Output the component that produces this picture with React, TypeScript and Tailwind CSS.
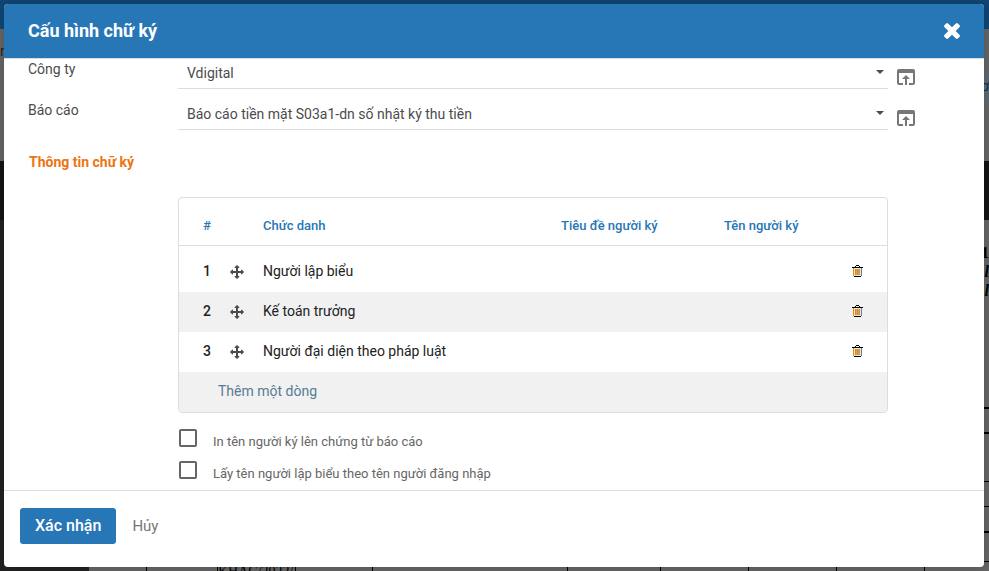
import { useState } from "react";
import { MdOpenInBrowser } from "react-icons/md";

const TIMES =
  "M1490 1322q0 40-28 68l-136 136q-28 28-68 28t-68-28l-294-294-294 294q-28 28-68 28t-68-28l-136-136q-28-28-28-68t28-68l294-294-294-294q-28-28-28-68t28-68l136-136q28-28 68-28t68 28l294 294 294-294q28-28 68-28t68 28l136 136q28 28 28 68t-28 68l-294 294 294 294q28 28 28 68z";
const ARROWS =
  "M1792 896q0 26-19 45l-256 256q-19 19-45 19t-45-19-19-45v-128h-384v384h128q26 0 45 19t19 45-19 45l-256 256q-19 19-45 19t-45-19l-256-256q-19-19-19-45t19-45 45-19h128v-384h-384v128q0 26-19 45t-45 19-45-19l-256-256q-19-19-19-45t19-45l256-256q19-19 45-19t45 19 19 45v128h384v-384h-128q-26 0-45-19t-19-45 19-45l256-256q19-19 45-19t45 19l256 256q19 19 19 45t-19 45-45 19h-128v384h384v-128q0-26 19-45t45-19 45 19l256 256q19 19 19 45z";

function MoveIcon() {
  return (
    <svg viewBox="0 0 1792 1792" className="size-[14px] fill-[#4c4c4c]" aria-hidden="true">
      <path d={ARROWS} />
    </svg>
  );
}

function TrashIcon() {
  return (
    <svg viewBox="0 0 11 12" className="h-3 w-[11px]" aria-hidden="true">
      <rect x="1" y="3" width="9" height="8" fill="#f8e6cc" />
      <path d="M1 3h1v8H1zM3 4h1v6H3zM5 4h1v6H5zM7 4h1v6H7z" fill="#d98a1c" />
      <path d="M4 4h1v6H4zM6 4h1v6H6z" fill="#c9a67c" />
      <path d="M9 3h1v8H9z" fill="#4f86bd" />
      <path d="M4 0h3v1H4zM3 1h1v1H3zM7 1h1v1H7zM0 2h11v1H0zM2 11h7v1H2z" fill="#000" />
    </svg>
  );
}

function SelectRow({ id, label, value }: { id: string; label: string; value: string }) {
  return (
    <div className="flex h-[41px] items-start">
      <label htmlFor={id} className="w-[150px] shrink-0 text-sm leading-5 text-[#4c4c4c]">
        {label}
      </label>
      <div className="relative mr-1.5 h-[30px] flex-1 border-b border-[#dddddd]">
        <select
          id={id}
          className="h-full w-full appearance-none bg-transparent pb-0.5 pl-[9px] text-sm text-[#4c4c4c] outline-none"
        >
          <option>{value}</option>
        </select>
        <span className="pointer-events-none absolute top-[11px] right-1 border-x-4 border-t-4 border-x-transparent border-t-[#4c4c4c]" />
      </div>
      <button type="button" aria-label={"Mở " + label} className="mt-1.5 text-[#777777]">
        <MdOpenInBrowser className="size-6" />
      </button>
    </div>
  );
}

function CheckRow({ id, label }: { id: string; label: string }) {
  return (
    <div className="flex h-8 items-start">
      <input
        id={id}
        type="checkbox"
        className="ml-px size-[18px] shrink-0 appearance-none rounded-xs border-2 border-[#666666] checked:bg-[#2776b6]"
      />
      <label htmlFor={id} className="pt-[5px] pl-4 text-[13px] leading-4 text-[#666666]">
        {label}
      </label>
    </div>
  );
}

function Backdrop() {
  return (
    <div className="absolute inset-0 flex flex-col bg-[#666666]" aria-hidden="true">
      <div className="h-[29px] shrink-0 bg-[#104775]" />
      <div className="flex h-[132px] shrink-0 justify-between">
        <span className="pt-3 text-sm text-[#222222]">n</span>
        <div className="mt-[42px] h-[30px] w-2 bg-[#5d6973] text-right text-sm leading-[30px] text-[#12304f]">
          ơ
        </div>
      </div>
      <div className="h-[59px] shrink-0 bg-[#141414]" />
      <div className="flex flex-1">
        <div className="w-[89px] bg-[#222222]" />
        <div className="flex flex-1 flex-col">
          <div className="flex h-[187px] flex-col items-end pt-[23px] font-[Liberation_Serif] text-base leading-[19px] font-bold text-black">
            <span>1</span>
            <span className="italic">l</span>
            <span className="italic">l</span>
          </div>
          <div className="h-[27px] border-y-2 border-black" />
          <div className="h-12 border-b border-black" />
          <div className="h-[25px] border-b border-black" />
          <div className="h-[26px] border-b-2 border-black" />
          <div className="h-[29px] border-b border-black" />
          <div className="flex flex-1 font-[Liberation_Serif] text-sm leading-5 text-black">
            <div className="w-[58px] border-r border-black" />
            <div className="w-[71px] border-r border-black" />
            <div className="h-[9px] w-[78px] border-r border-black">KHAC/2022/</div>
            <div className="w-[77px] border-r border-black" />
            <div className="w-[195px] border-r border-black" />
            <div className="w-[93px] border-r border-black" />
            <div className="w-[88px] border-r border-black" />
            <div className="w-[88px] border-r border-black" />
            <div className="w-[88px] border-r border-black" />
          </div>
        </div>
      </div>
    </div>
  );
}

const ROWS = ["Người lập biểu", "Kế toán trưởng", "Người đại diện theo pháp luật"];

export default function App() {
  const [rows] = useState(ROWS);
  return (
    <div className="relative flex h-screen overflow-hidden pt-1 pr-[5px] pb-1 pl-1 font-[Roboto,sans-serif]">
      <Backdrop />
      <div
        role="dialog"
        aria-labelledby="dialog-title"
        className="relative flex flex-1 flex-col overflow-hidden rounded bg-white shadow-[0_0_12px_rgba(0,0,0,0.2)]"
      >
        <header className="flex h-[54px] shrink-0 items-center justify-between bg-[#2776b6] px-6 text-white">
          <h1 id="dialog-title" className="text-lg font-bold">
            Cấu hình chữ ký
          </h1>
          <button type="button" aria-label="Đóng">
            <svg viewBox="302 366 1188 1188" className="size-4 fill-white" aria-hidden="true">
              <path d={TIMES} />
            </svg>
          </button>
        </header>

        <main className="min-h-0 flex-1 overflow-hidden border-t border-[#dddddd] pr-[66px] pl-6">
          <SelectRow id="company" label="Công ty" value="Vdigital" />
          <SelectRow id="report" label="Báo cáo" value="Báo cáo tiền mặt S03a1-dn số nhật ký thu tiền" />

          <h2 className="mt-[11px] pl-px text-sm leading-5 font-bold text-[#ee7411]">Thông tin chữ ký</h2>

          <div className="mt-[25px] mr-[30px] ml-[150px]">
            <div className="overflow-hidden rounded border border-[#dddddd]">
              <table className="w-full table-fixed border-collapse text-left text-sm text-[#222222]">
                <colgroup>
                  <col className="w-[44px]" />
                  <col className="w-[40px]" />
                  <col className="w-[298px]" />
                  <col className="w-[163px]" />
                  <col />
                  <col className="w-[60px]" />
                </colgroup>
                <thead>
                  <tr className="h-[47px] border-b border-[#dddddd] text-[13px] text-[#2776b6]">
                    <th className="pt-[11px] pl-6 font-medium">#</th>
                    <th />
                    <th className="pt-[11px] font-medium">Chức danh</th>
                    <th className="pt-[11px] font-medium">Tiêu đề người ký</th>
                    <th className="pt-[11px] font-medium">Tên người ký</th>
                    <th />
                  </tr>
                </thead>
                <tbody>
                  <tr className="h-[7px]">
                    <td colSpan={6} />
                  </tr>
                  {rows.map((name, i) => (
                    <tr key={name} className="h-10 even:bg-white odd:bg-[#f1f1f1]">
                      <td className="pb-0.5 pl-6 font-medium">{i + 1}</td>
                      <td className="pl-[7px]">
                        <MoveIcon />
                      </td>
                      <td className="pb-0.5">{name}</td>
                      <td />
                      <td />
                      <td className="pb-0.5 pl-[25px]">
                        <button type="button" aria-label={"Xóa " + name} className="block">
                          <TrashIcon />
                        </button>
                      </td>
                    </tr>
                  ))}
                  <tr className="h-10 bg-[#f1f1f1]">
                    <td colSpan={6} className="pb-0.5 pl-[39px]">
                      <button type="button" className="text-[#567b94]">
                        Thêm một dòng
                      </button>
                    </td>
                  </tr>
                </tbody>
              </table>
            </div>
            <div className="mt-4">
              <CheckRow id="print-name" label="In tên người ký lên chứng từ báo cáo" />
              <CheckRow id="login-name" label="Lấy tên người lập biểu theo tên người đăng nhập" />
            </div>
          </div>
        </main>

        <footer className="flex h-[77px] shrink-0 items-start gap-4 border-t border-[#dcdce4] px-4 pt-[17px]">
          <button type="button" className="h-9 rounded-[3px] bg-[#2776b6] px-[15px] text-base font-medium text-white">
            Xác nhận
          </button>
          <button type="button" className="h-9 text-[15px] text-[#777777]">
            Hủy
          </button>
        </footer>
      </div>
    </div>
  );
}
